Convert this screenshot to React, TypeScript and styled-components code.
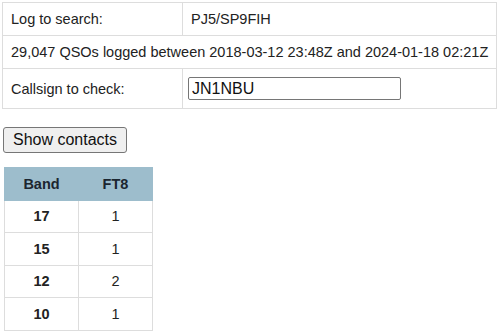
import React from "react";
import styled, { createGlobalStyle } from "styled-components";

const GlobalStyle = createGlobalStyle`
    body {
        margin: 0;
        background: #ffffff;
        font-family: "Liberation Sans", Arial, sans-serif;
        color: #222222;
    }
`;

const Page = styled.main`
    display: flex;
    flex-direction: column;
    align-items: flex-start;
    padding: 2px 0 0 2px;
`;

const InfoTable = styled.table`
    border-collapse: collapse;
    width: 494px;
    font-size: 14.5px;
`;

const InfoCell = styled.td<{ $label?: boolean }>`
    border: 1px solid #dddddd;
    padding: 8px 8px;
    width: ${(p) => (p.$label ? "163px" : "auto")};
    line-height: 16px;
    white-space: nowrap;
`;

const InputCell = styled(InfoCell)`
    padding: 8px 5px 8px 5px;
`;

const CallInput = styled.input`
    display: block;
    width: 213px;
    height: 23px;
    box-sizing: border-box;
    font-family: "Liberation Sans", Arial, sans-serif;
    font-size: 16px;
    padding: 1px 3px;
    border: 1px solid #767676;
    border-radius: 2px;
    color: #111111;
`;

const Button = styled.button`
    margin: 18px 0 0 1px;
    height: 26px;
    padding: 1px 9px;
    font-family: "Liberation Sans", Arial, sans-serif;
    font-size: 16px;
    color: #111111;
    background: #efefef;
    border: 1px solid #767676;
    border-radius: 3px;
`;

const BandTable = styled.table`
    margin: 14px 0 0 2px;
    border-collapse: collapse;
    width: 149px;
    font-size: 14.5px;
    text-align: center;
`;

const HeadCell = styled.th`
    background: #9dbdcc;
    border: 1px solid #9dbdcc;
    height: 31.5px;
    padding: 0;
    font-weight: bold;
    color: #1c2630;
    width: 50%;
`;

const Cell = styled.td<{ $bold?: boolean }>`
    border: 1px solid #dddddd;
    height: 31.5px;
    padding: 0;
    font-weight: ${(p) => (p.$bold ? "bold" : "normal")};
    color: #222222;
`;

const rows = [
    { band: "17", ft8: "1" },
    { band: "15", ft8: "1" },
    { band: "12", ft8: "2" },
    { band: "10", ft8: "1" },
];

export default function App() {
    return (
        <>
            <GlobalStyle />
            <Page>
                <InfoTable>
                    <tbody>
                        <tr>
                            <InfoCell $label>Log to search:</InfoCell>
                            <InfoCell>PJ5/SP9FIH</InfoCell>
                        </tr>
                        <tr>
                            <InfoCell colSpan={2}>
                                29,047 QSOs logged between 2018-03-12 23:48Z and 2024-01-18 02:21Z
                            </InfoCell>
                        </tr>
                        <tr>
                            <InfoCell $label>Callsign to check:</InfoCell>
                            <InputCell>
                                <CallInput defaultValue="JN1NBU" />
                            </InputCell>
                        </tr>
                    </tbody>
                </InfoTable>
                <Button>Show contacts</Button>
                <BandTable>
                    <thead>
                        <tr>
                            <HeadCell>Band</HeadCell>
                            <HeadCell>FT8</HeadCell>
                        </tr>
                    </thead>
                    <tbody>
                        {rows.map((r) => (
                            <tr key={r.band}>
                                <Cell $bold>{r.band}</Cell>
                                <Cell>{r.ft8}</Cell>
                            </tr>
                        ))}
                    </tbody>
                </BandTable>
            </Page>
        </>
    );
}
